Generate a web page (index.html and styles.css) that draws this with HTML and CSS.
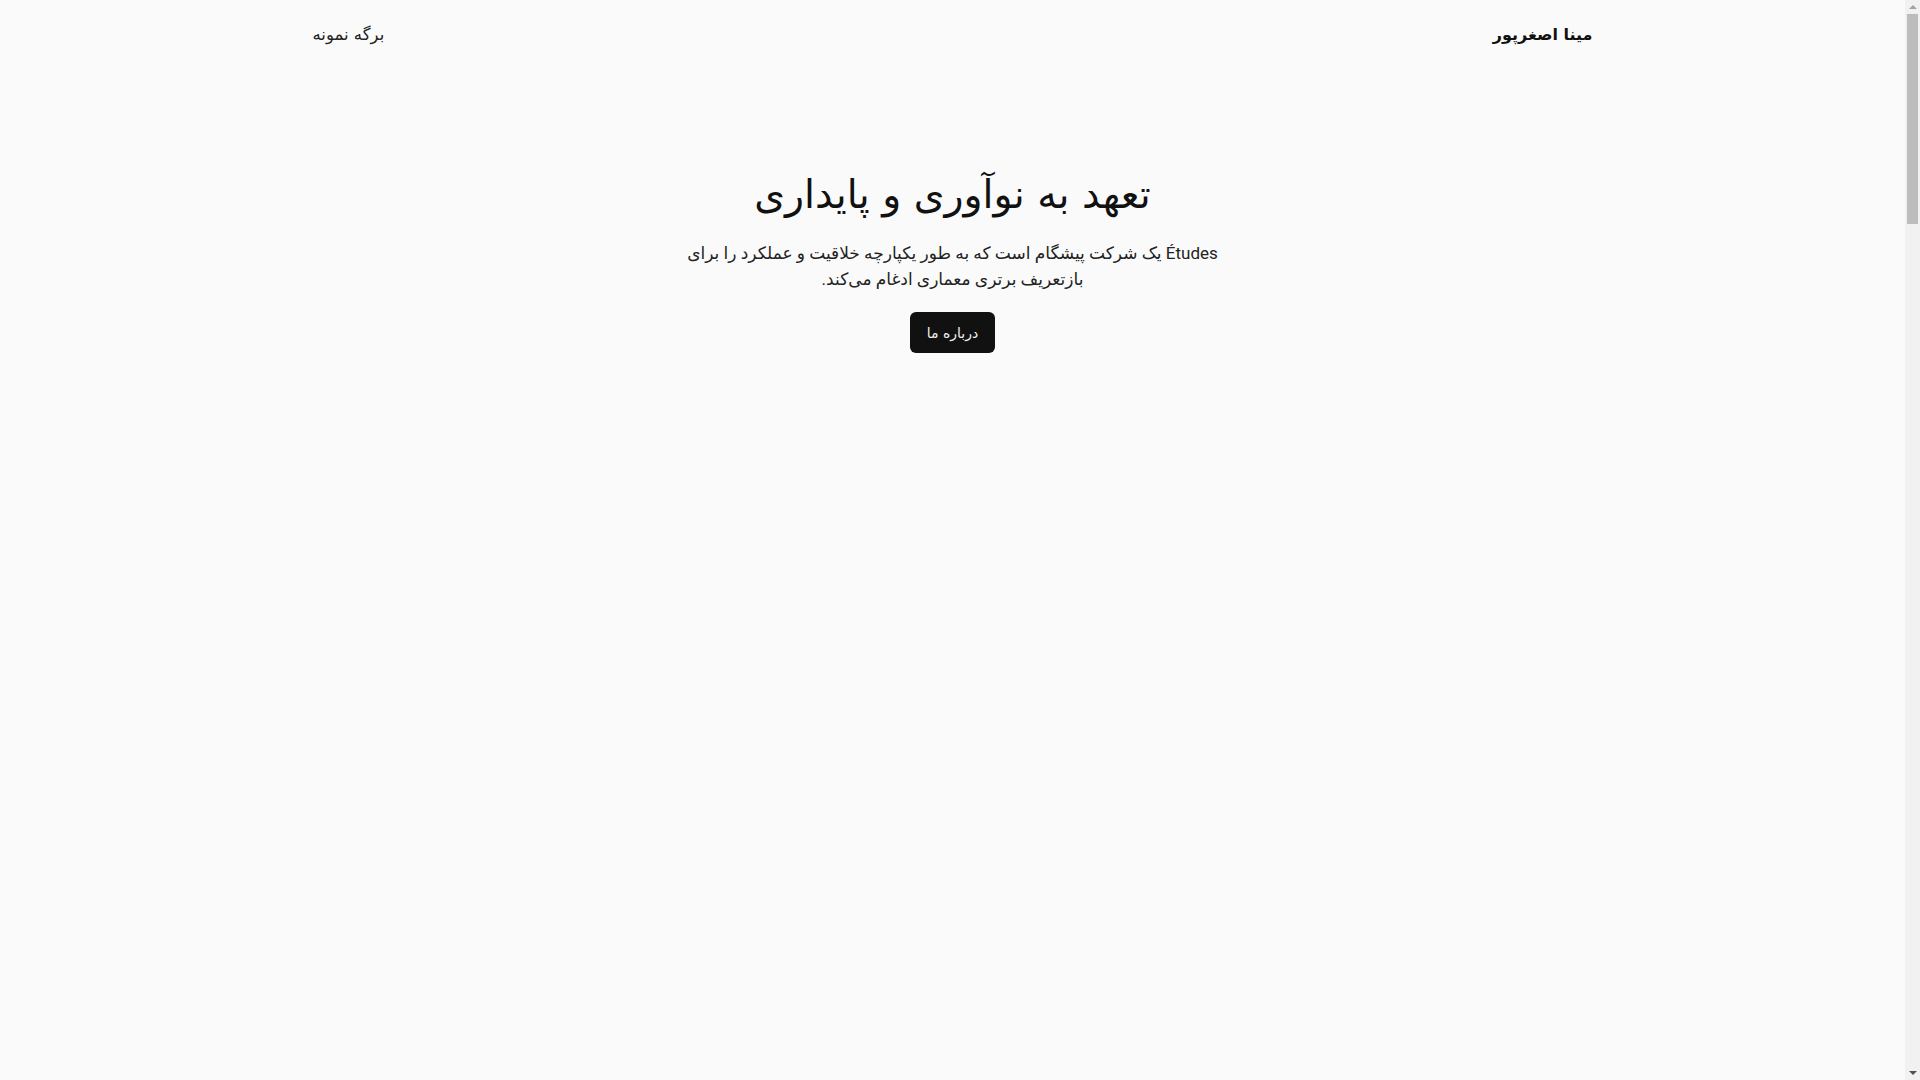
FILE: index.html
```html
<!DOCTYPE html>
<html lang="fa" dir="rtl">
<head>
<meta charset="utf-8">
<title>مینا اصغرپور</title>
<link rel="stylesheet" href="styles.css">
</head>
<body>
<header class="site-header">
  <div class="container header-row">
    <a class="brand" href="#">مینا اصغرپور</a>
    <nav class="nav"><a href="#">برگه نمونه</a></nav>
  </div>
</header>
<main>
  <section class="hero">
    <h1 class="hero-title">تعهد به نوآوری و پایداری</h1>
    <p class="hero-text">Études یک شرکت پیشگام است که به طور یکپارچه خلاقیت و عملکرد را برای بازتعریف برتری معماری ادغام می‌کند.</p>
    <a class="btn" href="#">درباره ما</a>
  </section>
  <div class="rest"></div>
</main>
<div class="scrollbar" aria-hidden="true">
  <span class="sb-arrow sb-up"></span>
  <div class="sb-track"><div class="sb-thumb"></div></div>
  <span class="sb-arrow sb-down"></span>
</div>
</body>
</html>
```

FILE: styles.css
```css
* { box-sizing: border-box; }
html, body { margin: 0; padding: 0; }
body {
  background: #fafafa;
  color: #111;
  font-family: Roboto, "DejaVu Sans", sans-serif;
  padding-right: 15px;
}
a { color: inherit; text-decoration: none; }
.container {
  max-width: 1280px;
  margin: 0 auto;
}
.header-row {
  display: flex;
  justify-content: space-between;
  align-items: center;
  height: 68px;
}
.brand {
  font-family: "DejaVu Sans", sans-serif;
  font-weight: bold;
  font-size: 16px;
}
.nav a {
  font-family: "DejaVu Sans", sans-serif;
  font-size: 16.5px;
  color: #222;
}
.hero {
  display: flex;
  flex-direction: column;
  align-items: center;
  text-align: center;
  padding-top: 102px;
}
.hero-title {
  font-family: "DejaVu Sans", sans-serif;
  font-weight: normal;
  font-size: 39.4px;
  line-height: 48px;
  margin: 0 0 23px;
}
.hero-text {
  max-width: 560px;
  font-size: 17px;
  line-height: 25.5px;
  margin: 0 0 20px;
  color: #222;
}
.btn {
  display: inline-flex;
  align-items: center;
  justify-content: center;
  height: 41px;
  padding: 0 17px;
  background: #111;
  color: #f0f0f0;
  border-radius: 6px;
  font-family: "DejaVu Sans", sans-serif;
  font-size: 14px;
}
.rest { height: 4900px; }

.scrollbar {
  position: fixed;
  top: 0;
  right: 0;
  width: 15px;
  height: 100vh;
  background: #f1f1f1;
  display: flex;
  flex-direction: column;
  align-items: center;
}
.sb-arrow {
  width: 0;
  height: 0;
  border-left: 4px solid transparent;
  border-right: 4px solid transparent;
  margin: 5px 0;
}
.sb-up { border-bottom: 4px solid #a3a3a3; }
.sb-down { border-top: 4px solid #505050; margin-top: auto; }
.sb-track {
  width: 100%;
  padding: 0 2px;
}
.sb-thumb {
  height: 210px;
  background: #bcbcbc;
}
```
